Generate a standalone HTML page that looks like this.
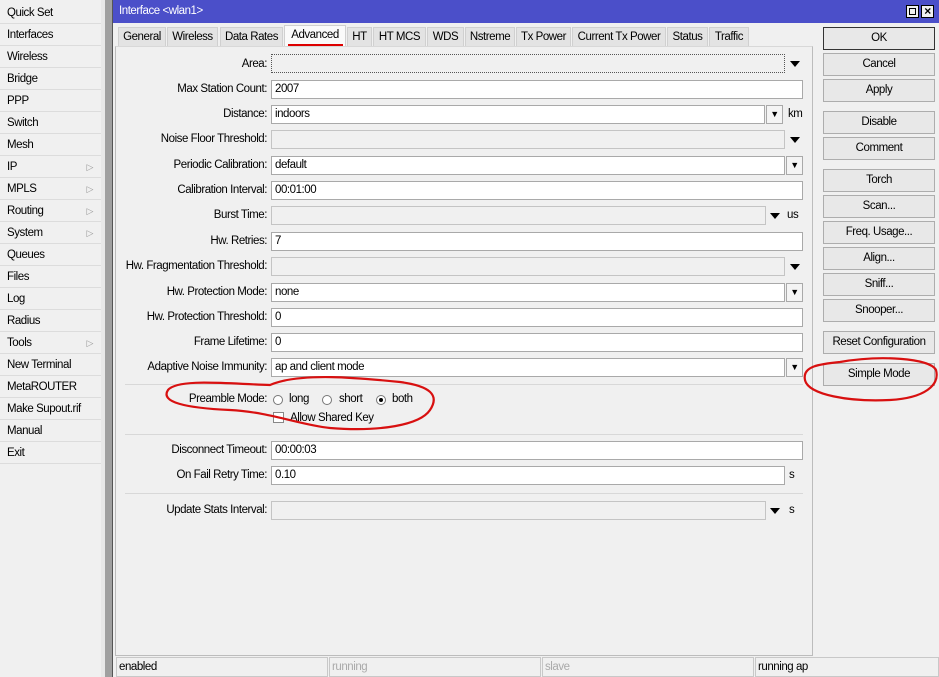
<!DOCTYPE html>
<html><head><style>
*{box-sizing:border-box;margin:0;padding:0}
body{width:939px;height:677px;position:relative;overflow:hidden;background:#f0f0f0;font-family:"Liberation Sans",Arial,sans-serif;font-size:11.5px;color:#000;letter-spacing:-0.45px}
.a{position:absolute}
.menu div{position:absolute;left:0;width:101px;height:22px;line-height:22px;padding-left:7px;border-bottom:1px solid #dcdcdc;background:#f0f0f0}
.menu span{position:absolute;right:8px;top:0;color:#999;font-size:9px}
.lbl{position:absolute;right:672px;text-align:right;white-space:nowrap;height:18px;line-height:18px}
.in{position:absolute;left:271px;height:19px;border:1px solid #a9a9a9;background:#fff;line-height:17px;padding-left:3px;white-space:nowrap}
.dis{background:#f0f0f0;border-color:#c4c4c4}
.btn{position:absolute;left:823px;width:112px;height:23px;border:1px solid #adadad;background:#e8e8e8;text-align:center;line-height:21px}
.tab{position:absolute;top:27px;height:19px;line-height:19px;text-align:center;background:#e3e3e3;border:1px solid #d0d0d0;border-bottom:none}
.dd{position:absolute;height:19px;width:17px;border:1px solid #a9a9a9;background:#f4f4f4;text-align:center;font-size:9px;line-height:17px}
.tri{position:absolute;width:0;height:0;border-left:5px solid transparent;border-right:5px solid transparent;border-top:6px solid #000}
.sep{position:absolute;left:125px;width:678px;height:1px;background:#d8d8d8}
.u{position:absolute;height:18px;line-height:18px}
</style></head><body>
<div class="menu">
<div style="top:2px">Quick Set</div><div style="top:24px">Interfaces</div><div style="top:46px">Wireless</div><div style="top:68px">Bridge</div><div style="top:90px">PPP</div><div style="top:112px">Switch</div><div style="top:134px">Mesh</div><div style="top:156px">IP<span>▷</span></div><div style="top:178px">MPLS<span>▷</span></div><div style="top:200px">Routing<span>▷</span></div><div style="top:222px">System<span>▷</span></div><div style="top:244px">Queues</div><div style="top:266px">Files</div><div style="top:288px">Log</div><div style="top:310px">Radius</div><div style="top:332px">Tools<span>▷</span></div><div style="top:354px">New Terminal</div><div style="top:376px">MetaROUTER</div><div style="top:398px">Make Supout.rif</div><div style="top:420px">Manual</div><div style="top:442px">Exit</div>
</div>
<div class="a" style="left:101px;top:0;width:4px;height:677px;background:#e8e8e8"></div>
<div class="a" style="left:105px;top:0;width:7px;height:677px;background:#a0a0a0"></div>
<div class="a" style="left:112px;top:0;width:1px;height:677px;background:#555"></div>
<div class="a" style="left:113px;top:0;width:826px;height:23px;background:#4b4fc9;color:#fff;padding:5px 0 0 6px">Interface &lt;wlan1&gt;</div>
<div class="a" style="left:906px;top:5px;width:13px;height:13px;border:1px solid #000;background:#f0f0f0"><div style="position:absolute;left:2px;top:2px;width:7px;height:7px;border:1px solid #000"></div></div>
<div class="a" style="left:921px;top:5px;width:13px;height:13px;border:1px solid #000;background:#f0f0f0;font-size:12px;line-height:11px;text-align:center;font-weight:bold">×</div>
<div class="tab" style="left:118px;width:48px">General</div>
<div class="tab" style="left:167px;width:51px">Wireless</div>
<div class="tab" style="left:220px;width:63px">Data Rates</div>
<div class="tab" style="left:284px;width:62px;background:#fafafa;top:25px;height:22px">Advanced</div>
<div class="a" style="left:288px;top:44px;width:55px;height:2px;background:#d00"></div>
<div class="tab" style="left:347px;width:25px">HT</div>
<div class="tab" style="left:373px;width:53px">HT MCS</div>
<div class="tab" style="left:427px;width:37px">WDS</div>
<div class="tab" style="left:465px;width:50px">Nstreme</div>
<div class="tab" style="left:516px;width:55px">Tx Power</div>
<div class="tab" style="left:572px;width:94px">Current Tx Power</div>
<div class="tab" style="left:667px;width:41px">Status</div>
<div class="tab" style="left:709px;width:40px">Traffic</div>
<div class="a" style="left:115px;top:46px;width:698px;height:610px;border:1px solid #bcbcbc;border-top:1px solid #d8d8d8"></div>

<div class="lbl" style="top:55px">Area:</div><div class="in" style="top:54px;width:514px;border:1px dotted #555;background:#f0f0f0"></div><div class="tri" style="left:790px;top:61px"></div>
<div class="lbl" style="top:80px">Max Station Count:</div><div class="in" style="top:80px;width:532px">2007</div>
<div class="lbl" style="top:105px">Distance:</div><div class="in" style="top:105px;width:494px">indoors</div><div class="dd" style="left:766px;top:105px">▼</div><div class="u" style="left:788px;top:105px">km</div>
<div class="lbl" style="top:130px">Noise Floor Threshold:</div><div class="in dis" style="top:130px;width:514px"></div><div class="tri" style="left:790px;top:137px"></div>
<div class="lbl" style="top:156px">Periodic Calibration:</div><div class="in" style="top:156px;width:514px">default</div><div class="dd" style="left:786px;top:156px">▼</div>
<div class="lbl" style="top:181px">Calibration Interval:</div><div class="in" style="top:181px;width:532px">00:01:00</div>
<div class="lbl" style="top:206px">Burst Time:</div><div class="in dis" style="top:206px;width:495px"></div><div class="tri" style="left:770px;top:213px"></div><div class="u" style="left:787px;top:206px">us</div>
<div class="lbl" style="top:232px">Hw. Retries:</div><div class="in" style="top:232px;width:532px">7</div>
<div class="lbl" style="top:257px">Hw. Fragmentation Threshold:</div><div class="in dis" style="top:257px;width:514px"></div><div class="tri" style="left:790px;top:264px"></div>
<div class="lbl" style="top:283px">Hw. Protection Mode:</div><div class="in" style="top:283px;width:514px">none</div><div class="dd" style="left:786px;top:283px">▼</div>
<div class="lbl" style="top:308px">Hw. Protection Threshold:</div><div class="in" style="top:308px;width:532px">0</div>
<div class="lbl" style="top:333px">Frame Lifetime:</div><div class="in" style="top:333px;width:532px">0</div>
<div class="lbl" style="top:358px">Adaptive Noise Immunity:</div><div class="in" style="top:358px;width:514px">ap and client mode</div><div class="dd" style="left:786px;top:358px">▼</div>
<div class="sep" style="top:384px"></div>
<div class="lbl" style="top:390px">Preamble Mode:</div>
<div class="a" style="left:273px;top:395px;width:10px;height:10px;border:1px solid #777;border-radius:50%;background:#fff"></div><div class="u" style="left:289px;top:390px">long</div>
<div class="a" style="left:322px;top:395px;width:10px;height:10px;border:1px solid #777;border-radius:50%;background:#fff"></div><div class="u" style="left:339px;top:390px">short</div>
<div class="a" style="left:376px;top:395px;width:10px;height:10px;border:1px solid #777;border-radius:50%;background:#fff"><div style="position:absolute;left:2px;top:2px;width:4px;height:4px;border-radius:50%;background:#000"></div></div><div class="u" style="left:392px;top:390px">both</div>
<div class="a" style="left:273px;top:412px;width:11px;height:11px;border:1px solid #888;background:#fff"></div><div class="u" style="left:290px;top:409px">Allow Shared Key</div>
<div class="sep" style="top:434px"></div>
<div class="lbl" style="top:441px">Disconnect Timeout:</div><div class="in" style="top:441px;width:532px">00:00:03</div>
<div class="lbl" style="top:466px">On Fail Retry Time:</div><div class="in" style="top:466px;width:514px">0.10</div><div class="u" style="left:789px;top:466px">s</div>
<div class="sep" style="top:493px"></div>
<div class="lbl" style="top:501px">Update Stats Interval:</div><div class="in dis" style="top:501px;width:495px"></div><div class="tri" style="left:770px;top:508px"></div><div class="u" style="left:789px;top:501px">s</div>

<div class="btn" style="top:27px;border-color:#333">OK</div>
<div class="btn" style="top:53px">Cancel</div>
<div class="btn" style="top:79px">Apply</div>
<div class="btn" style="top:111px">Disable</div>
<div class="btn" style="top:137px">Comment</div>
<div class="btn" style="top:169px">Torch</div>
<div class="btn" style="top:195px">Scan...</div>
<div class="btn" style="top:221px">Freq. Usage...</div>
<div class="btn" style="top:247px">Align...</div>
<div class="btn" style="top:273px">Sniff...</div>
<div class="btn" style="top:299px">Snooper...</div>
<div class="btn" style="top:331px">Reset Configuration</div>
<div class="btn" style="top:363px">Simple Mode</div>

<div class="a" style="left:116px;top:657px;width:212px;height:20px;border:1px solid #c8c8c8;padding-left:2px;line-height:19px">enabled</div>
<div class="a" style="left:329px;top:657px;width:212px;height:20px;border:1px solid #c8c8c8;padding-left:2px;line-height:19px;color:#aaa">running</div>
<div class="a" style="left:542px;top:657px;width:212px;height:20px;border:1px solid #c8c8c8;padding-left:2px;line-height:19px;color:#aaa">slave</div>
<div class="a" style="left:755px;top:657px;width:184px;height:20px;border:1px solid #c8c8c8;padding-left:2px;line-height:19px">running ap</div>

<svg class="a" style="left:0;top:0" width="939" height="677">
<g fill="none" stroke="#d81010" stroke-width="2.2">
<path d="M270,385 C300,372 360,378 400,382 C430,386 440,395 430,410 C420,425 380,432 330,428 C300,425 270,412 230,410 C185,408 160,402 168,390 C178,378 230,384 270,385 Z"/>
<path d="M840,362 C880,355 930,358 936,370 C940,385 925,398 890,400 C850,402 808,395 805,380 C802,366 820,364 840,362"/>
</g></svg>
</body></html>
